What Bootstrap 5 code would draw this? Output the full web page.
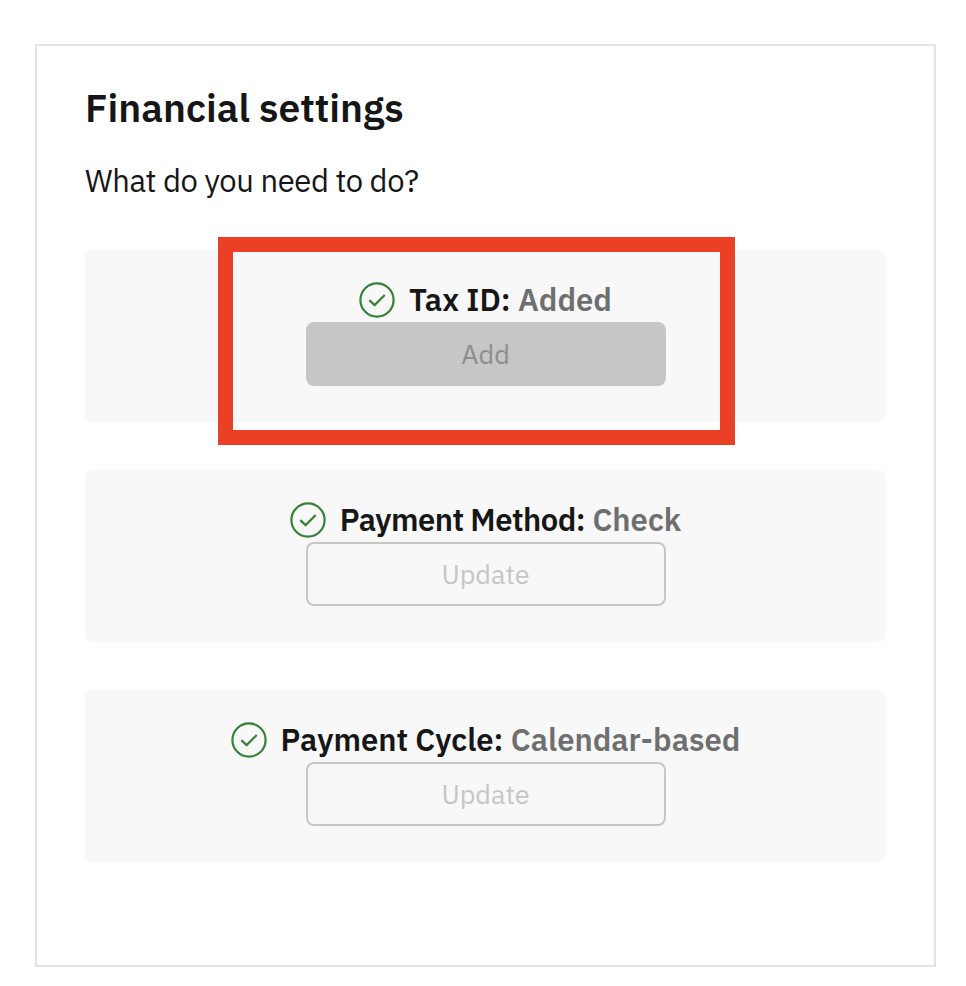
<!DOCTYPE html>
<html lang="en">
<head>
<meta charset="utf-8">
<meta name="viewport" content="width=device-width, initial-scale=1">
<title>Financial settings</title>
<link href="https://cdn.jsdelivr.net/npm/bootstrap@5.3.0/dist/css/bootstrap.min.css" rel="stylesheet">
<style>
  body { font-family: "IBM Plex Sans", "Noto Sans", sans-serif; color: #161616; background: #fff; }
  .settings-page { padding: 44px 30px 0 35px; }
  .settings-box { height: 923px; padding: 36px 48px 0; border: 2px solid #e4e4e4; }
  .settings-title { font-family: "IBM Plex Sans", "Open Sans", sans-serif; font-size: 39px; font-weight: 600; line-height: 52px; margin-bottom: 26px; }
  .settings-intro { font-size: 31px; line-height: 42px; letter-spacing: -.4px; margin-bottom: 48px; }
  .setting-stack { gap: 48px; }
  .setting-panel { height: 172px; padding-top: 28px; background: #f8f8f8; border-radius: 8px; }
  .setting-label { height: 44px; gap: 14px; font-size: 31px; font-weight: 600; line-height: 44px; }
  .setting-value { color: #6f6f6f; }
  .name-tight { letter-spacing: -.52px; }
  .setting-btn { width: 360px; height: 64px; padding: 0; border: 2px solid #c6c6c6; border-radius: 8px; font-size: 27px; line-height: 58px; }
  .setting-btn:disabled { color: #c6c6c6; border-color: #c6c6c6; opacity: 1; }
  .setting-btn-filled:disabled { color: #8d8d8d; background: #c6c6c6; }
  .callout-frame { top: -13px; left: 133px; width: 517px; height: 208px; border: 15px solid #eb4026; }
</style>
</head>
<body>
<svg class="d-none" aria-hidden="true">
  <symbol id="check-circle" viewBox="0 0 36 36">
    <circle cx="18" cy="18" r="16.6" fill="none" stroke="#37813b" stroke-width="2.2"/>
    <path d="M10.3 18.1 15.6 23.1 25.7 12.9" fill="none" stroke="#37813b" stroke-width="2.2"/>
  </symbol>
</svg>
<main class="settings-page">
  <section class="settings-box">
    <h1 class="settings-title">Financial settings</h1>
    <p class="settings-intro">What do you need to do?</p>
    <div class="setting-stack d-flex flex-column">
      <div class="setting-panel position-relative d-flex flex-column align-items-center">
        <div class="setting-label d-flex align-items-center">
          <svg width="36" height="36"><use href="#check-circle"/></svg>
          <div>Tax ID: <span class="setting-value">Added</span></div>
        </div>
        <button class="btn setting-btn setting-btn-filled" type="button" disabled>Add</button>
        <div class="callout-frame position-absolute"></div>
      </div>
      <div class="setting-panel d-flex flex-column align-items-center">
        <div class="setting-label d-flex align-items-center">
          <svg width="36" height="36"><use href="#check-circle"/></svg>
          <div><span class="name-tight">Payment Method:</span> <span class="setting-value">Check</span></div>
        </div>
        <button class="btn setting-btn" type="button" disabled>Update</button>
      </div>
      <div class="setting-panel d-flex flex-column align-items-center">
        <div class="setting-label d-flex align-items-center">
          <svg width="36" height="36"><use href="#check-circle"/></svg>
          <div>Payment Cycle: <span class="setting-value">Calendar-based</span></div>
        </div>
        <button class="btn setting-btn" type="button" disabled>Update</button>
      </div>
    </div>
  </section>
</main>
<script src="https://cdn.jsdelivr.net/npm/bootstrap@5.3.0/dist/js/bootstrap.bundle.min.js"></script>
</body>
</html>
